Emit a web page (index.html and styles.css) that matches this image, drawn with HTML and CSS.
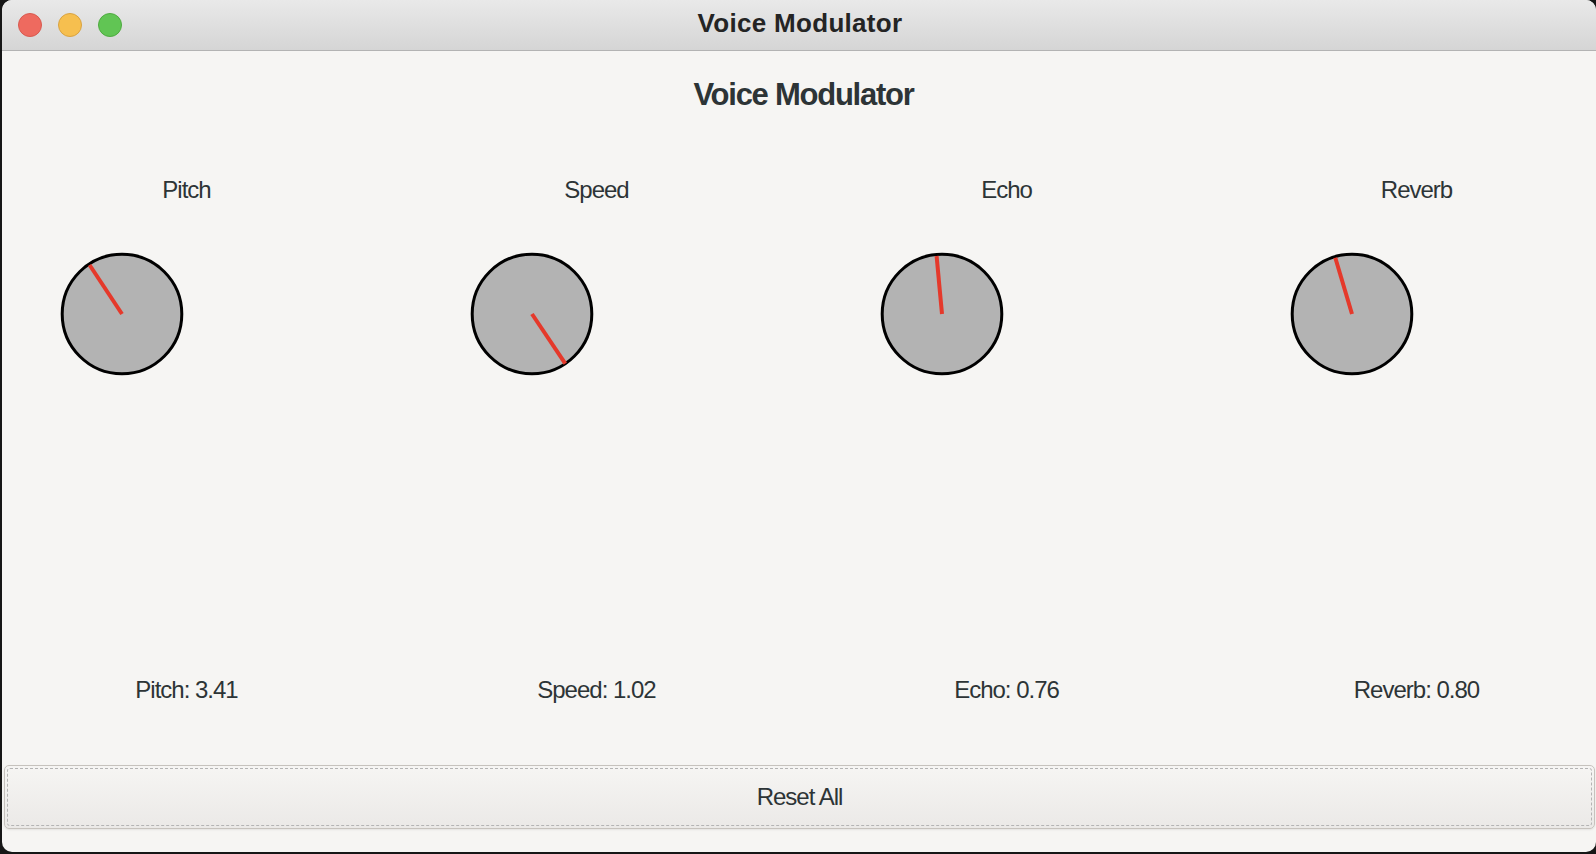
FILE: index.html
```html
<!DOCTYPE html>
<html>
<head>
<meta charset="utf-8">
<title>Voice Modulator</title>
<link rel="stylesheet" href="styles.css">
</head>
<body>
<div class="window">
  <div class="titlebar">
    <div class="lights">
      <span class="light red"></span>
      <span class="light yellow"></span>
      <span class="light green"></span>
    </div>
    <div class="title">Voice Modulator</div>
    <div class="spacer"></div>
  </div>
  <div class="content">
    <h1 class="heading">Voice Modulator</h1>
    <div class="controls">
      <div class="control">
        <div class="label">Pitch</div>
        <svg class="knob" width="130" height="130" viewBox="0 0 130 130">
          <circle cx="65" cy="65" r="59.8" fill="#b3b3b3" stroke="#000" stroke-width="3"/>
          <line x1="65" y1="65" x2="32.6" y2="16" stroke="#e5392b" stroke-width="4"/>
        </svg>
        <div class="value">Pitch: 3.41</div>
      </div>
      <div class="control">
        <div class="label">Speed</div>
        <svg class="knob" width="130" height="130" viewBox="0 0 130 130">
          <circle cx="65" cy="65" r="59.8" fill="#b3b3b3" stroke="#000" stroke-width="3"/>
          <line x1="65" y1="65" x2="98.3" y2="114.7" stroke="#e5392b" stroke-width="4"/>
        </svg>
        <div class="value">Speed: 1.02</div>
      </div>
      <div class="control">
        <div class="label">Echo</div>
        <svg class="knob" width="130" height="130" viewBox="0 0 130 130">
          <circle cx="65" cy="65" r="59.8" fill="#b3b3b3" stroke="#000" stroke-width="3"/>
          <line x1="65" y1="65" x2="59.6" y2="7" stroke="#e5392b" stroke-width="4"/>
        </svg>
        <div class="value">Echo: 0.76</div>
      </div>
      <div class="control">
        <div class="label">Reverb</div>
        <svg class="knob" width="130" height="130" viewBox="0 0 130 130">
          <circle cx="65" cy="65" r="59.8" fill="#b3b3b3" stroke="#000" stroke-width="3"/>
          <line x1="65" y1="65" x2="48.3" y2="8.7" stroke="#e5392b" stroke-width="4"/>
        </svg>
        <div class="value">Reverb: 0.80</div>
      </div>
    </div>
    <button class="reset">Reset All</button>
  </div>
</div>
</body>
</html>
```

FILE: styles.css
```css
html, body {
  margin: 0;
  padding: 0;
  background: #161616;
  overflow: hidden;
}

body {
  width: 1596px;
  height: 854px;
}

.window {
  margin-left: 2px;
  width: 1594px;
  height: 852px;
  border-radius: 10px;
  overflow: hidden;
  background: #f6f5f3;
  display: flex;
  flex-direction: column;
  font-family: "Liberation Sans", Arial, sans-serif;
}

.titlebar {
  height: 50px;
  flex: none;
  border-bottom: 1px solid #b3b3b3;
  background: linear-gradient(to bottom, #e9e9e9, #d5d5d5);
  display: grid;
  grid-template-columns: 1fr auto 1fr;
  align-items: center;
}

.lights {
  display: flex;
  gap: 16px;
  padding-left: 16px;
}

.light {
  width: 22px;
  height: 22px;
  border-radius: 50%;
  box-sizing: content-box;
}

.light.red {
  background: #ee6a5f;
  border: 1px solid #d85a50;
}

.light.yellow {
  background: #f6bf4f;
  border: 1px solid #d9a342;
}

.light.green {
  background: #61c554;
  border: 1px solid #4fab40;
}

.title {
  font-size: 26px;
  font-weight: bold;
  color: #242424;
  line-height: 30px;
  padding-bottom: 5px;
  padding-left: 2px;
  letter-spacing: 0.3px;
}

.content {
  flex: 1;
  display: flex;
  flex-direction: column;
  padding-top: 26px;
}

.heading {
  margin: 0;
  font-size: 31px;
  line-height: 36px;
  font-weight: bold;
  letter-spacing: -1.25px;
  color: #2d3436;
  text-align: center;
  padding-left: 9px;
}

.controls {
  display: grid;
  grid-template-columns: repeat(4, 359px);
  column-gap: 51px;
  padding-left: 5px;
  margin-top: 63px;
}

.control {
  display: flex;
  flex-direction: column;
}

.label,
.value {
  font-size: 24px;
  line-height: 28px;
  letter-spacing: -1px;
  color: #2d3436;
  text-align: center;
}

.knob {
  display: block;
  margin-top: 45px;
  margin-left: 50px;
}

.value {
  margin-top: 297px;
}

.reset {
  margin: 61px 1px 0 2px;
  height: 64px;
  flex: none;
  position: relative;
  border: 1px solid #c6c2bd;
  border-radius: 5px;
  background: linear-gradient(to bottom, #f6f5f3, #ebe9e7);
  box-shadow: 0 1px 2px rgba(0, 0, 0, 0.08);
  font-family: "Liberation Sans", Arial, sans-serif;
  font-size: 24px;
  line-height: 28px;
  letter-spacing: -1px;
  color: #2d3436;
  padding: 0;
}

.reset::after {
  content: "";
  position: absolute;
  inset: 2px;
  border: 1.5px dashed #b4b4b4;
  border-radius: 3px;
}
```
